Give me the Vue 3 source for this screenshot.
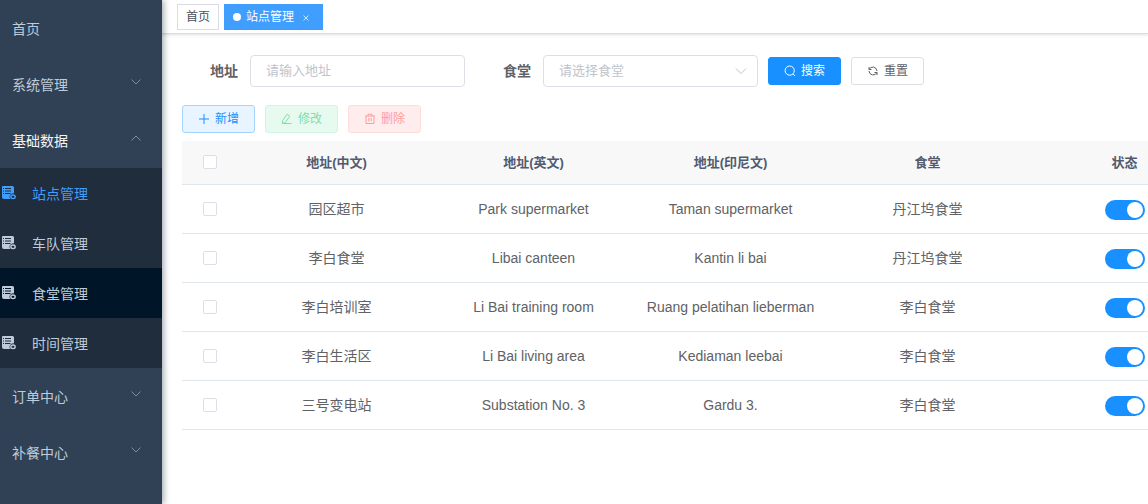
<script setup>
import { reactive, ref } from 'vue'

const stations = reactive([
  { id: 1, zh: '园区超市', en: 'Park supermarket', idn: 'Taman supermarket', canteen: '丹江坞食堂', on: true },
  { id: 2, zh: '李白食堂', en: 'Libai canteen', idn: 'Kantin li bai', canteen: '丹江坞食堂', on: true },
  { id: 3, zh: '李白培训室', en: 'Li Bai training room', idn: 'Ruang pelatihan lieberman', canteen: '李白食堂', on: true },
  { id: 4, zh: '李白生活区', en: 'Li Bai living area', idn: 'Kediaman leebai', canteen: '李白食堂', on: true },
  { id: 5, zh: '三号变电站', en: 'Substation No. 3', idn: 'Gardu 3.', canteen: '李白食堂', on: true }
])

const menu = [
  { title: '首页' },
  { title: '系统管理', group: true },
  {
    title: '基础数据',
    group: true,
    open: true,
    children: [
      { title: '站点管理', state: 'active' },
      { title: '车队管理' },
      { title: '食堂管理', state: 'hover' },
      { title: '时间管理' }
    ]
  },
  { title: '订单中心', group: true },
  { title: '补餐中心', group: true }
]

const address = ref('')
const canteen = ref('')
</script>

<template>
  <div class="layout">
    <nav class="sidebar">
      <template v-for="item in menu" :key="item.title">
        <a v-if="!item.group" class="menu-item" href="#">{{ item.title }}</a>
        <button v-else type="button" class="menu-item" :class="{ open: item.open }" :aria-expanded="!!item.open">
          <span>{{ item.title }}</span>
          <svg class="arrow" viewBox="0 0 12 12"><path d="M1.500 3.500 6 8l4.500-4.500" /></svg>
        </button>
        <div v-if="item.children" class="submenu">
          <a v-for="child in item.children" :key="child.title" href="#" class="sub-item" :class="child.state">
            <svg class="sub-icon" viewBox="0 0 14 14">
              <path
                fill-rule="evenodd"
                d="M1 0h9.500a1.500 1.500 0 0 1 1.500 1.500V7.400a4 3.500 0 0 0-4.500 3.600q0 1.200 1 2H2a2 2 0 0 1-2-2V1a1 1 0 0 1 1-1zM1 2v1h1V2zM3 2v1h6V2zM1 4.500v1h1v-1zM3 4.500v1h6v-1zM1 7v1h1V7zM3 7v1h5.500V7z"
              />
              <ellipse class="ring" cx="11" cy="10.800" rx="2.200" ry="1.800" />
            </svg>
            <span>{{ child.title }}</span>
          </a>
        </div>
      </template>
    </nav>

    <div class="main">
      <div class="tags">
        <a class="tag" href="#">首页</a>
        <div class="tag current">
          <span class="dot"></span>
          <a href="#">站点管理</a>
          <button type="button" class="close" aria-label="关闭">
            <svg viewBox="0 0 8 8"><path d="m1.500 1.500 5 5M6.500 1.500l-5 5" /></svg>
          </button>
        </div>
      </div>

      <main class="content">
        <form class="search" @submit.prevent>
          <div class="field">
            <label for="address">地址</label>
            <input id="address" v-model="address" class="control" type="text" placeholder="请输入地址" />
          </div>
          <div class="field">
            <label for="canteen">食堂</label>
            <div class="select-box">
              <select id="canteen" v-model="canteen" class="control">
                <option value="">请选择食堂</option>
                <option>丹江坞食堂</option>
                <option>李白食堂</option>
              </select>
              <svg class="caret" viewBox="0 0 14 14"><path d="m2 4.500 5 5 5-5" /></svg>
            </div>
          </div>
          <div class="buttons">
            <button type="submit" class="btn primary">
              <svg viewBox="0 0 12 12"><circle cx="5.700" cy="5.600" r="4.600" /><path d="m9 9 2 2" /></svg>
              <span>搜索</span>
            </button>
            <button type="reset" class="btn">
              <svg viewBox="0 0 12 12">
                <path d="M2 2v2.500h2.500M2 4.500A4.200 4.200 0 0 1 10 6M10 10V7.500H7.500M10 7.500A4.200 4.200 0 0 1 2 6" />
              </svg>
              <span>重置</span>
            </button>
          </div>
        </form>

        <div class="buttons toolbar">
          <button type="button" class="btn add">
            <svg viewBox="0 0 12 12"><path d="M6 1v10M1 6h10" /></svg>
            <span>新增</span>
          </button>
          <button type="button" class="btn edit" disabled>
            <svg viewBox="0 0 12 12"><path d="M1.500 7.800 6 1.300l2.800 1.900-4.500 6.300-3 1zM1.500 10.500H10.500" /></svg>
            <span>修改</span>
          </button>
          <button type="button" class="btn remove" disabled>
            <svg viewBox="0 0 12 12"><path d="M1 3h10M4 3V1.200h4V3M2 3v7.500h8V3M4.800 5v3.500M7.200 5v3.500" /></svg>
            <span>删除</span>
          </button>
        </div>

        <table class="grid">
          <thead>
            <tr>
              <th class="pick"><input type="checkbox" class="check" aria-label="全选" /></th>
              <th>地址(中文)</th>
              <th>地址(英文)</th>
              <th>地址(印尼文)</th>
              <th>食堂</th>
              <th>状态</th>
            </tr>
          </thead>
          <tbody>
            <tr v-for="row in stations" :key="row.id">
              <td><input type="checkbox" class="check" :aria-label="row.zh" /></td>
              <td>{{ row.zh }}</td>
              <td>{{ row.en }}</td>
              <td>{{ row.idn }}</td>
              <td>{{ row.canteen }}</td>
              <td><input v-model="row.on" type="checkbox" role="switch" class="switch" :aria-label="row.zh + '状态'" /></td>
            </tr>
          </tbody>
        </table>
      </main>
    </div>
  </div>
</template>

<style>
body {
  overflow: hidden;
}
</style>

<style scoped>
* {
  box-sizing: border-box;
}

.layout {
  display: flex;
  min-height: 100vh;
  background: #fff;
  color: #606266;
  font-family: "Liberation Sans", "Noto Sans CJK SC", sans-serif;
  font-size: 14px;
}

button,
input,
select {
  margin: 0;
  font-family: inherit;
}

button {
  cursor: pointer;
}

a {
  color: inherit;
  text-decoration: none;
}

svg {
  flex: none;
  fill: none;
  stroke: currentColor;
}

.sidebar {
  z-index: 1;
  flex: none;
  width: 162px;
  background: #304156;
  box-shadow: 2px 0 6px rgba(0, 21, 41, 0.35);
}

.menu-item {
  display: flex;
  align-items: center;
  justify-content: space-between;
  width: 100%;
  height: 56px;
  padding: 0 20px 0 12px;
  border: 0;
  background: none;
  color: #bfcbd9;
  font-size: 14px;
}

.menu-item.open {
  color: #f4f4f5;
}

.arrow {
  width: 12px;
  height: 12px;
  margin-bottom: 4px;
  color: #818a95;
}

.open .arrow {
  transform: rotate(180deg);
}

.submenu {
  background: #1f2d3d;
}

.sub-item {
  display: flex;
  align-items: center;
  gap: 16px;
  height: 50px;
  padding-left: 2px;
  color: #bfcbd9;
}

.sub-item.active {
  color: #409eff;
}

.sub-item.hover {
  background: #001528;
}

.sub-icon {
  width: 14px;
  height: 14px;
  fill: currentColor;
  stroke: none;
}

.ring {
  fill: none;
  stroke: currentColor;
  stroke-width: 1.4;
}

.main {
  flex: 1;
  min-width: 0;
  overflow: hidden;
  line-height: 18px;
}

.tags {
  display: flex;
  gap: 5px;
  height: 34px;
  padding: 4px 15px 0;
  border-bottom: 1px solid #d8dce5;
  box-shadow: 0 1px 3px rgba(0, 0, 0, 0.12);
}

.tag {
  display: flex;
  align-items: center;
  height: 26px;
  padding: 0 8px;
  border: 1px solid #d8dce5;
  color: #495060;
  font-size: 12px;
}

.tag.current {
  border-color: #409eff;
  background: #409eff;
  color: #fff;
}

.dot {
  width: 8px;
  height: 8px;
  margin-right: 5px;
  border-radius: 50%;
  background: #fff;
}

.close {
  display: flex;
  align-items: center;
  justify-content: center;
  width: 16px;
  height: 16px;
  margin-left: 4px;
  padding: 2px 0 0;
  border: 0;
  background: none;
  color: #d0e6ff;
}

.close svg {
  width: 8px;
  height: 8px;
}

.content {
  padding: 21px 0 0 20px;
}

.search {
  display: flex;
  align-items: center;
}

.field {
  display: flex;
  align-items: center;
  margin-right: 10px;
}

.field label {
  width: 68px;
  padding-right: 12px;
  font-weight: 700;
  text-align: right;
}

.control {
  display: block;
  width: 215px;
  height: 32px;
  padding: 0 15px 2px;
  border: 1px solid #dcdfe6;
  border-radius: 4px;
  outline: 0;
  background: #fff;
  color: #c0c4cc;
  font-size: 13px;
  appearance: none;
}

.control::placeholder {
  color: #c0c4cc;
}

.select-box {
  position: relative;
}

.caret {
  position: absolute;
  top: 9px;
  right: 10px;
  width: 14px;
  height: 14px;
  color: #c0c4cc;
  pointer-events: none;
}

.buttons {
  display: flex;
  gap: 10px;
}

.toolbar {
  margin-top: 18px;
}

.btn {
  display: flex;
  align-items: center;
  justify-content: center;
  gap: 5px;
  height: 28px;
  padding: 0 15px;
  border: 1px solid #dcdfe6;
  border-radius: 3px;
  background: #fff;
  color: #606266;
  font-size: 12px;
  line-height: 18px;
}

.btn svg {
  width: 12px;
  height: 12px;
}

.btn.primary {
  border-color: #1890ff;
  background: #1890ff;
  color: #fff;
}

.btn.add {
  border-color: #a3d3ff;
  background: #e8f4ff;
  color: #1890ff;
}

.btn.edit {
  border-color: #d0f5e0;
  background: #e7faf0;
  color: #80e0a8;
}

.btn.remove {
  border-color: #ffdbdb;
  background: #ffeded;
  color: #ff9c9c;
}

.grid {
  width: 100%;
  min-width: 1041px;
  margin-top: 8px;
  border-collapse: separate;
  border-spacing: 0;
  table-layout: fixed;
  text-align: center;
}

.grid th,
.grid td {
  height: 49px;
  padding: 0 10px;
  border-bottom: 1px solid #dfe6ec;
}

.grid th {
  height: 44px;
  background: #f8f8f9;
  color: #515a6e;
  font-size: 13px;
}

.grid .pick {
  width: 56px;
}

.check {
  display: block;
  width: 14px;
  height: 14px;
  margin: 0 auto;
  border: 1px solid #dcdfe6;
  border-radius: 2px;
  background: #fff;
  appearance: none;
}

thead .check {
  margin-bottom: 2px;
}

.check:checked {
  border-color: #1890ff;
  background: #1890ff;
}

.switch {
  display: flex;
  align-items: center;
  width: 40px;
  height: 20px;
  margin: 2px auto 0;
  padding: 0 2px;
  border-radius: 10px;
  background: #dcdfe6;
  appearance: none;
}

.switch::before {
  width: 16px;
  height: 16px;
  border-radius: 50%;
  background: #fff;
  content: "";
}

.switch:checked {
  justify-content: flex-end;
  background: #1890ff;
}
</style>
